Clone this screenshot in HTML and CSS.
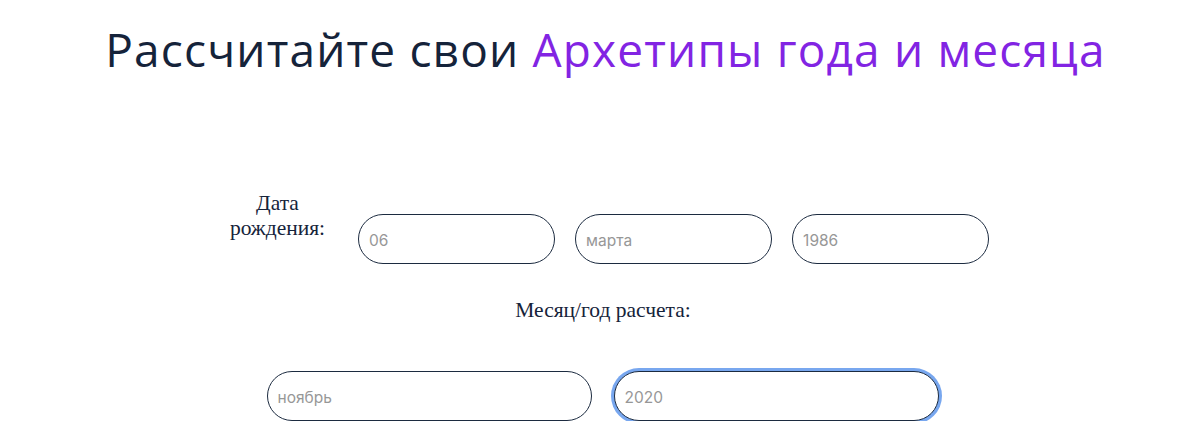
FILE: index.html
```html
<!DOCTYPE html>
<html lang="ru">
<head>
<meta charset="utf-8">
<title>Архетипы</title>
<link rel="stylesheet" href="styles.css">
</head>
<body>
<main class="page">
  <h1 class="title">Рассчитайте свои <span class="accent">Архетипы года и месяца</span></h1>
  <div class="row row-birth">
    <div class="label label-birth">Дата<br>рождения:</div>
    <input class="field field-sm" type="text" placeholder="06">
    <input class="field field-sm" type="text" placeholder="марта">
    <input class="field field-sm" type="text" placeholder="1986">
  </div>
  <div class="label label-calc">Месяц/год расчета:</div>
  <div class="row row-calc">
    <input class="field field-lg" type="text" placeholder="ноябрь">
    <input class="field field-lg field-focus" type="text" placeholder="2020">
  </div>
</main>
</body>
</html>
```

FILE: styles.css
```css
html, body {
  margin: 0;
  padding: 0;
  background: #ffffff;
}

.page {
  width: 1200px;
  display: flex;
  flex-direction: column;
  align-items: center;
}

.title {
  margin: 21px 0 0 11px;
  font-family: "Open Sans", "Liberation Sans", sans-serif;
  font-weight: 400;
  font-size: 46px;
  line-height: 56px;
  letter-spacing: 1.15px;
  color: #15233a;
  white-space: nowrap;
}

.accent {
  color: #8224e3;
}

.row {
  display: flex;
  align-items: flex-start;
}

.row-birth {
  margin-top: 114px;
  padding-left: 19px;
  gap: 20px;
}

.label {
  font-family: "Liberation Serif", "Times New Roman", serif;
  font-size: 21.5px;
  line-height: 25px;
  color: #15233a;
  text-align: center;
}

.label-birth {
  margin-right: 13px;
}

.label-calc {
  margin-top: 34px;
  padding-left: 6px;
}

.row-calc {
  margin-top: 48px;
  padding-left: 5px;
  gap: 22px;
}

.field {
  box-sizing: border-box;
  height: 50px;
  border: 1.2px solid #1c2b40;
  border-radius: 25px;
  padding: 2px 10px 0;
  font-family: "Inter", "Roboto", sans-serif;
  font-size: 15.5px;
  color: #333;
  background: #fff;
  outline: none;
}

.field::placeholder {
  color: #979797;
}

.row-birth .field {
  margin-top: 23px;
}

.field-sm {
  width: 197px;
}

.field-lg {
  width: 325px;
}

.field-focus {
  box-shadow: 0 0 0 3px #78a7ef;
}
```
